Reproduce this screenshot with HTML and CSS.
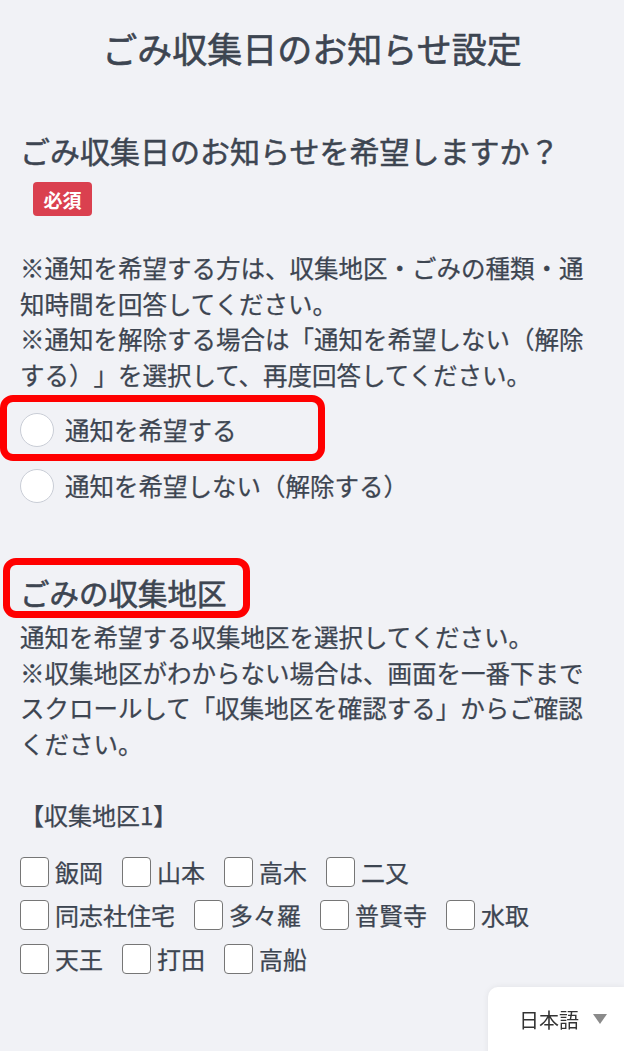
FILE: index.html
```html
<!DOCTYPE html>
<html lang="ja">
<head>
<meta charset="utf-8">
<title>ごみ収集日のお知らせ設定</title>
<link rel="stylesheet" href="styles.css">
</head>
<body>
<main class="page">
  <h1 class="title">ごみ収集日のお知らせ設定</h1>

  <section class="question">
    <h2 class="q-heading">ごみ収集日のお知らせを希望しますか？</h2>
    <span class="badge">必須</span>
    <p class="note">※通知を希望する方は、収集地区・ごみの種類・通知時間を回答してください。<br>※通知を解除する場合は「通知を希望しない（解除する）」を選択して、再度回答してください。</p>
    <div class="radios">
      <label class="radio-item">
        <span class="radio"></span>
        <span class="radio-label">通知を希望する</span>
        <span class="highlight hl-radio"></span>
      </label>
      <label class="radio-item">
        <span class="radio"></span>
        <span class="radio-label">通知を希望しない（解除する）</span>
      </label>
    </div>
  </section>

  <section class="question">
    <h2 class="s-heading">ごみの収集地区<span class="highlight hl-heading"></span></h2>
    <p class="note tight">通知を希望する収集地区を選択してください。<br>※収集地区がわからない場合は、画面を一番下までスクロールして「収集地区を確認する」からご確認ください。</p>
    <p class="group-title">【収集地区1】</p>
    <div class="checks">
      <div class="check-row">
        <label class="check-item"><span class="box"></span>飯岡</label>
        <label class="check-item"><span class="box"></span>山本</label>
        <label class="check-item"><span class="box"></span>高木</label>
        <label class="check-item"><span class="box"></span>二又</label>
      </div>
      <div class="check-row">
        <label class="check-item"><span class="box"></span>同志社住宅</label>
        <label class="check-item"><span class="box"></span>多々羅</label>
        <label class="check-item"><span class="box"></span>普賢寺</label>
        <label class="check-item"><span class="box"></span>水取</label>
      </div>
      <div class="check-row">
        <label class="check-item"><span class="box"></span>天王</label>
        <label class="check-item"><span class="box"></span>打田</label>
        <label class="check-item"><span class="box"></span>高船</label>
      </div>
    </div>
  </section>
</main>

<div class="lang">
  <span class="lang-text">日本語</span>
  <span class="lang-caret"></span>
</div>
</body>
</html>
```

FILE: styles.css
```css
html, body {
  margin: 0;
  padding: 0;
}

body {
  background: #f1f2f6;
  color: #3d4551;
  font-family: "Noto Sans CJK JP", "Noto Sans", sans-serif;
  width: 624px;
  height: 1051px;
  overflow: hidden;
  text-spacing-trim: space-all;
}

.page {
  padding: 0 20px;
}

.title {
  margin: 24px 0 0;
  font-size: 35px;
  line-height: 48px;
  font-weight: 400;
  text-align: center;
  -webkit-text-stroke: 0.6px #3d4551;
}

.question {
  display: flex;
  flex-direction: column;
  align-items: flex-start;
}

.q-heading {
  margin: 58px 0 0;
  font-size: 30px;
  line-height: 40px;
  font-weight: 400;
  -webkit-text-stroke: 0.5px #3d4551;
}

.badge {
  margin: 12px 0 0 13px;
  height: 34px;
  width: 59px;
  box-sizing: border-box;
  display: flex;
  align-items: center;
  justify-content: center;
  background: #da404f;
  color: #ffffff;
  border-radius: 4px;
  font-size: 19px;
  font-weight: 700;
}

.note {
  margin: 34px 0 0;
  font-size: 24.5px;
  line-height: 35.5px;
  -webkit-text-stroke: 0.25px #3d4551;
}

.note.tight {
  margin-top: 7px;
}

.radios {
  margin-top: 10px;
  display: flex;
  flex-direction: column;
}

.radio-item {
  position: relative;
  height: 56px;
  display: flex;
  align-items: center;
  gap: 11px;
}

.radio {
  width: 32px;
  height: 32px;
  border-radius: 50%;
  border: 1.5px solid #c9cdd6;
  background: #ffffff;
  flex: none;
}

.radio-label {
  font-size: 24.5px;
  line-height: 34px;
  -webkit-text-stroke: 0.25px #3d4551;
}

.highlight {
  position: absolute;
  box-sizing: border-box;
  border: 7px solid #ff0000;
  border-radius: 13px;
  pointer-events: none;
}

.hl-radio {
  left: -20px;
  top: -7px;
  width: 325px;
  height: 66px;
}

.s-heading {
  position: relative;
  margin: 58px 0 0;
  font-size: 29.5px;
  line-height: 40px;
  font-weight: 400;
  -webkit-text-stroke: 0.6px #3d4551;
}

.hl-heading {
  left: -17px;
  top: -14px;
  width: 247px;
  height: 60px;
  -webkit-text-stroke: 0;
}

.group-title {
  margin: 38px 0 0;
  font-size: 24px;
  line-height: 32px;
  -webkit-text-stroke: 0.25px #3d4551;
}

.checks {
  margin-top: 19px;
  display: flex;
  flex-direction: column;
}

.check-row {
  height: 43.5px;
  display: flex;
  align-items: center;
  gap: 19px;
}

.check-item {
  display: flex;
  align-items: center;
  gap: 6px;
  font-size: 24px;
  line-height: 30px;
  -webkit-text-stroke: 0.25px #3d4551;
}

.box {
  width: 29px;
  height: 30px;
  box-sizing: border-box;
  border: 1.5px solid #767676;
  border-radius: 4px;
  background: #ffffff;
  flex: none;
}

.lang {
  position: fixed;
  right: 0;
  bottom: -10px;
  width: 136px;
  height: 74px;
  box-sizing: border-box;
  padding: 0 0 10px 31px;
  background: #ffffff;
  border-radius: 10px 0 0 0;
  box-shadow: 0 0 6px rgba(0, 0, 0, 0.07);
  display: flex;
  align-items: center;
  gap: 14px;
}

.lang-text {
  font-size: 20px;
  color: #333333;
}

.lang-caret {
  width: 0;
  height: 0;
  border-left: 7.5px solid transparent;
  border-right: 7.5px solid transparent;
  border-top: 10px solid #8a8a8a;
}
```
